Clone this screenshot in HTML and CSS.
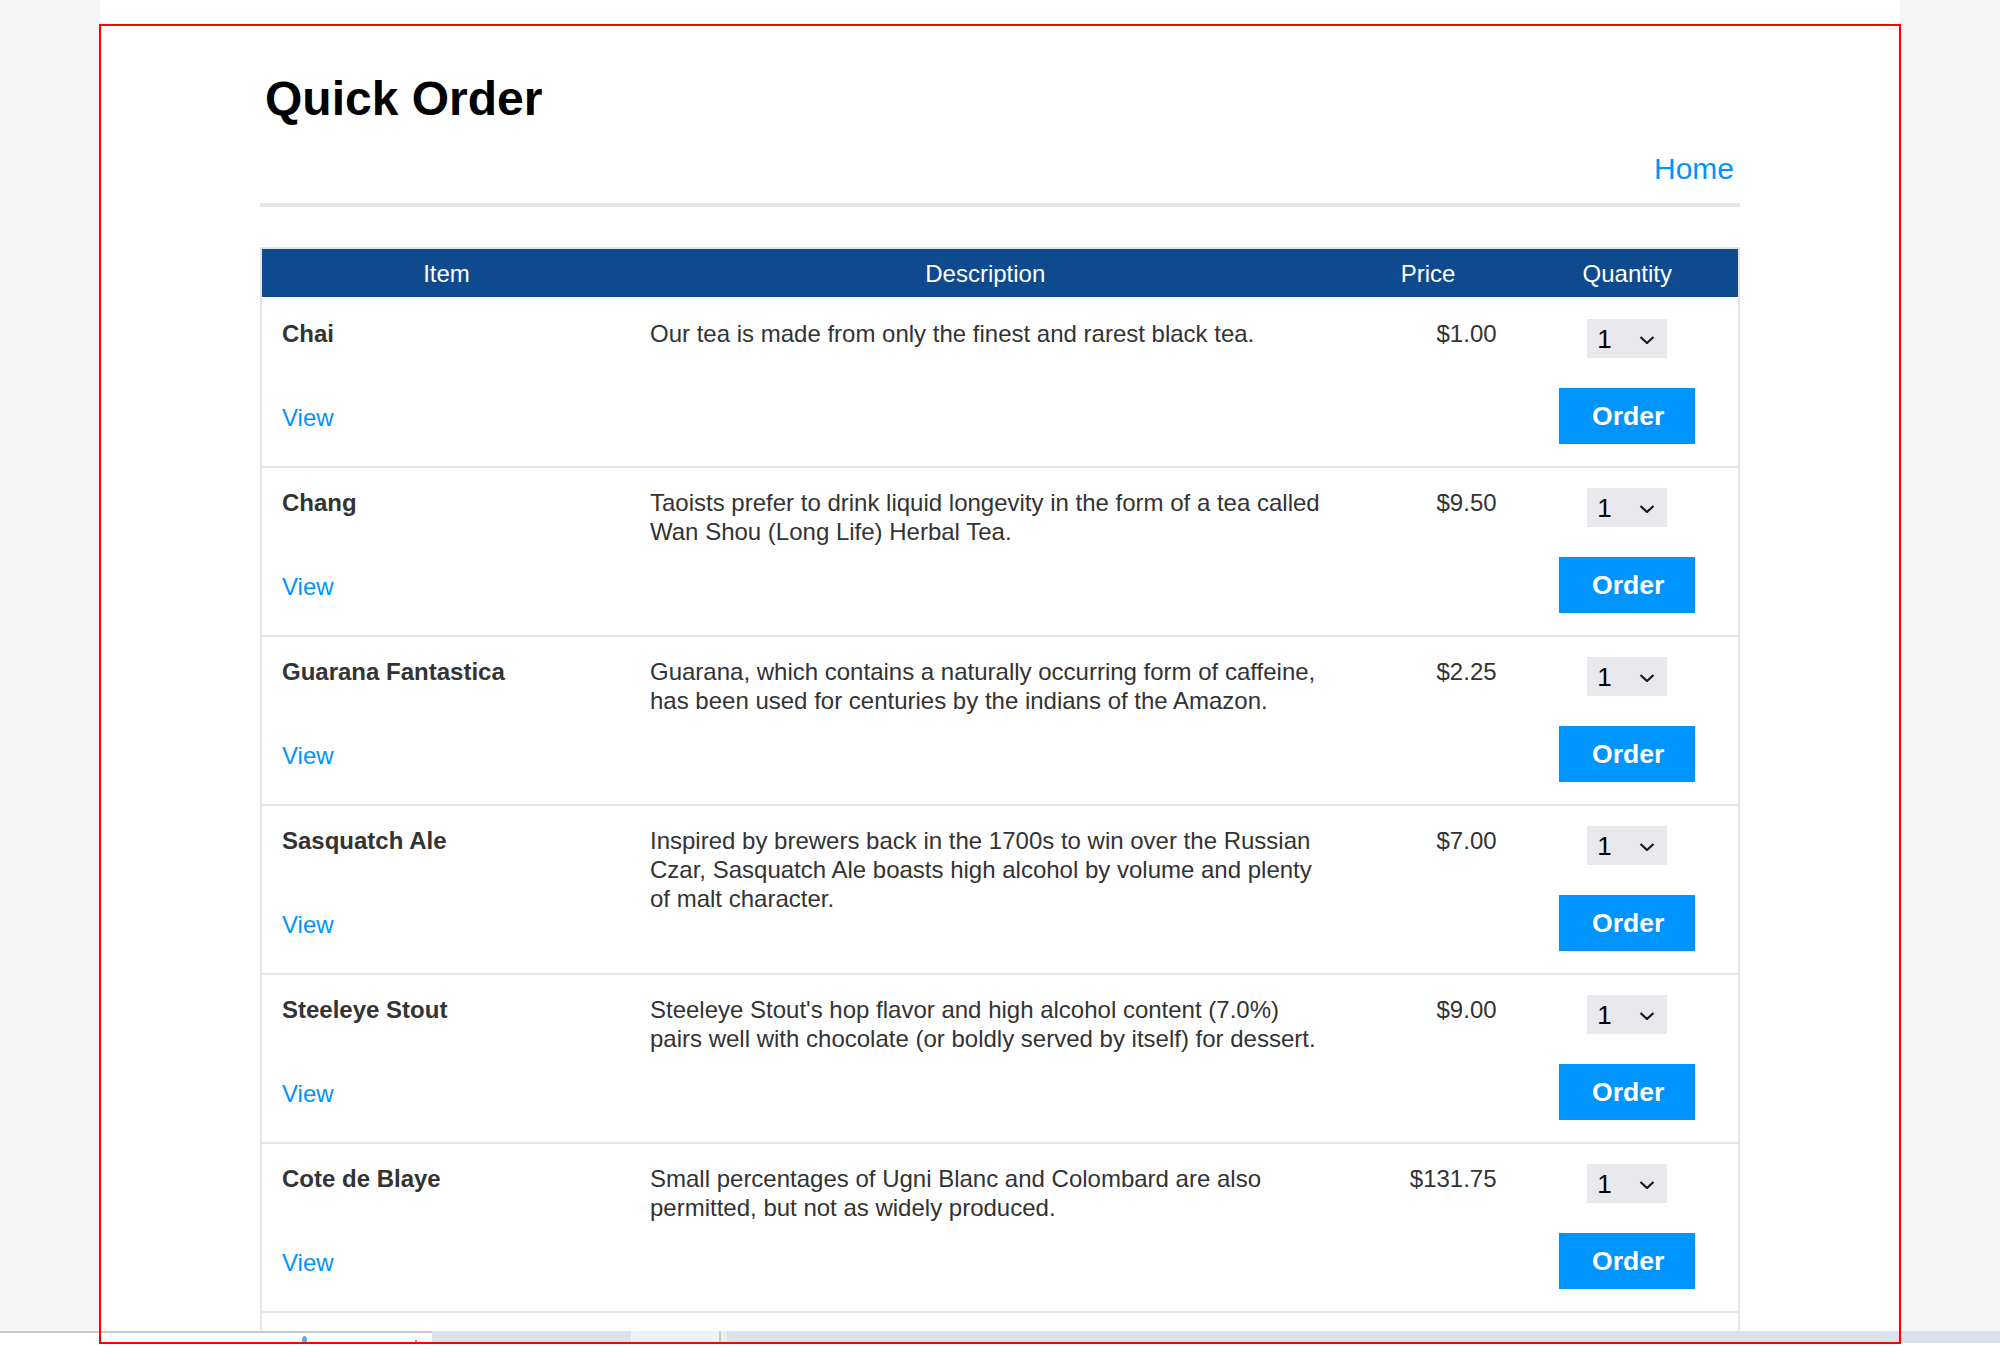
FILE: index.html
```html
<!DOCTYPE html>
<html lang="en">
<head>
<meta charset="utf-8">
<title>Quick Order</title>
<link rel="stylesheet" href="styles.css">
</head>
<body>
<div class="viewport">
  <div class="page">
    <div class="container">
      <h1 class="title">Quick Order</h1>
      <nav class="nav"><a href="#" class="nav-link">Home</a></nav>
      <div class="rule"></div>
      <div class="table">
        <div class="thead">
          <div class="th">Item</div>
          <div class="th">Description</div>
          <div class="th">Price</div>
          <div class="th">Quantity</div>
        </div>

        <div class="row">
          <div class="name">Chai</div>
          <div class="desc">Our tea is made from only the finest and rarest black tea.</div>
          <div class="price">$1.00</div>
          <div class="qty"><select class="qty-select"><option>1</option><option>2</option><option>3</option></select><svg class="chev" viewBox="0 0 16 8" width="16" height="8"><path d="M1.5 1 L8 7 L14.5 1" fill="none" stroke="#1a1a1a" stroke-width="2.2"/></svg></div>
          <a href="#" class="view">View</a>
          <button class="order">Order</button>
        </div>

        <div class="row">
          <div class="name">Chang</div>
          <div class="desc">Taoists prefer to drink liquid longevity in the form of a tea called Wan Shou (Long Life) Herbal Tea.</div>
          <div class="price">$9.50</div>
          <div class="qty"><select class="qty-select"><option>1</option><option>2</option><option>3</option></select><svg class="chev" viewBox="0 0 16 8" width="16" height="8"><path d="M1.5 1 L8 7 L14.5 1" fill="none" stroke="#1a1a1a" stroke-width="2.2"/></svg></div>
          <a href="#" class="view">View</a>
          <button class="order">Order</button>
        </div>

        <div class="row">
          <div class="name">Guarana Fantastica</div>
          <div class="desc">Guarana, which contains a naturally occurring form of caffeine, has been used for centuries by the indians of the Amazon.</div>
          <div class="price">$2.25</div>
          <div class="qty"><select class="qty-select"><option>1</option><option>2</option><option>3</option></select><svg class="chev" viewBox="0 0 16 8" width="16" height="8"><path d="M1.5 1 L8 7 L14.5 1" fill="none" stroke="#1a1a1a" stroke-width="2.2"/></svg></div>
          <a href="#" class="view">View</a>
          <button class="order">Order</button>
        </div>

        <div class="row">
          <div class="name">Sasquatch Ale</div>
          <div class="desc">Inspired by brewers back in the 1700s to win over the Russian Czar, Sasquatch Ale boasts high alcohol by volume and plenty of malt character.</div>
          <div class="price">$7.00</div>
          <div class="qty"><select class="qty-select"><option>1</option><option>2</option><option>3</option></select><svg class="chev" viewBox="0 0 16 8" width="16" height="8"><path d="M1.5 1 L8 7 L14.5 1" fill="none" stroke="#1a1a1a" stroke-width="2.2"/></svg></div>
          <a href="#" class="view">View</a>
          <button class="order">Order</button>
        </div>

        <div class="row">
          <div class="name">Steeleye Stout</div>
          <div class="desc">Steeleye Stout's hop flavor and high alcohol content (7.0%) pairs well with chocolate (or boldly served by itself) for dessert.</div>
          <div class="price">$9.00</div>
          <div class="qty"><select class="qty-select"><option>1</option><option>2</option><option>3</option></select><svg class="chev" viewBox="0 0 16 8" width="16" height="8"><path d="M1.5 1 L8 7 L14.5 1" fill="none" stroke="#1a1a1a" stroke-width="2.2"/></svg></div>
          <a href="#" class="view">View</a>
          <button class="order">Order</button>
        </div>

        <div class="row">
          <div class="name">Cote de Blaye</div>
          <div class="desc">Small percentages of Ugni Blanc and Colombard are also permitted, but not as widely produced.</div>
          <div class="price">$131.75</div>
          <div class="qty"><select class="qty-select"><option>1</option><option>2</option><option>3</option></select><svg class="chev" viewBox="0 0 16 8" width="16" height="8"><path d="M1.5 1 L8 7 L14.5 1" fill="none" stroke="#1a1a1a" stroke-width="2.2"/></svg></div>
          <a href="#" class="view">View</a>
          <button class="order">Order</button>
        </div>

        <div class="row row-partial"></div>
      </div>
    </div>
  </div>
</div>
<div class="statusbar">
  <div class="sb-tab"><span class="sb-dot"></span><span class="sb-mark"></span></div>
  <div class="sb-seg sb-a"></div>
  <div class="sb-seg sb-b"></div>
  <div class="sb-sep"></div>
  <div class="sb-seg sb-rest"></div>
</div>
<div class="footer-white"></div>
<div class="frame"></div>
</body>
</html>
```

FILE: styles.css
```css
html, body {
  margin: 0;
  padding: 0;
}

body {
  background: #ffffff;
  font-family: "Liberation Sans", Arial, sans-serif;
  color: #333333;
  position: relative;
  width: 2000px;
  height: 1369px;
  overflow: hidden;
}

.viewport {
  height: 1331px;
  background: #f5f5f5;
  overflow: hidden;
}

.page {
  width: 1800px;
  height: 1331px;
  margin: 0 auto;
  background: #ffffff;
  overflow: hidden;
}

.container {
  width: 1480px;
  margin: 0 auto;
  padding-top: 70px;
}

.title {
  margin: 0;
  padding-left: 5px;
  font-size: 48px;
  line-height: 58px;
  font-weight: bold;
  color: #000000;
}

.nav {
  margin-top: 23px;
  text-align: right;
  padding-right: 6px;
  font-size: 30px;
  line-height: 36px;
  height: 36px;
}

.nav-link {
  color: #0094ff;
  text-decoration: none;
}

.rule {
  margin-top: 16px;
  height: 4px;
  background: #e5e5e5;
}

.table {
  margin-top: 40px;
  border: 2px solid #e5e5e5;
  border-bottom: none;
}

.thead {
  display: grid;
  grid-template-columns: 25% 48% 12% 15%;
  height: 48px;
  background: #0f4a8f;
  border-bottom: 2px solid #ffffff;
}

.th {
  color: #ffffff;
  font-size: 24px;
  line-height: 48px;
  padding-top: 1px;
  text-align: center;
}

.row {
  display: grid;
  grid-template-columns: 25% 48% 12% 15%;
  grid-template-rows: 39px 56px;
  row-gap: 30px;
  padding: 20px 0 22px;
  border-bottom: 2px solid #e5e5e5;
  font-size: 24px;
  line-height: 28.8px;
}

.name {
  grid-column: 1;
  grid-row: 1;
  padding: 1px 0 0 20px;
  font-weight: bold;
  color: #333333;
}

.view {
  grid-column: 1;
  grid-row: 2;
  align-self: center;
  justify-self: start;
  margin-left: 20px;
  margin-top: 4px;
  color: #0094ff;
  text-decoration: none;
}

.desc {
  grid-column: 2;
  grid-row: 1 / span 2;
  padding: 1px 10px 0 19px;
  color: #333333;
}

.price {
  grid-column: 3;
  grid-row: 1;
  text-align: right;
  padding: 1px 20px 0 0;
  color: #333333;
}

.qty {
  grid-column: 4;
  grid-row: 1;
  justify-self: center;
  position: relative;
  width: 80px;
  height: 39px;
}

.qty-select {
  appearance: none;
  -webkit-appearance: none;
  width: 80px;
  height: 39px;
  margin: 0;
  border: none;
  border-radius: 0;
  background: #e9e9ed;
  color: #000000;
  font-family: "Liberation Sans", Arial, sans-serif;
  font-size: 26px;
  padding: 0 0 0 10px;
  outline: none;
}

.chev {
  position: absolute;
  right: 12px;
  top: 17px;
  pointer-events: none;
}

.order {
  grid-column: 4;
  grid-row: 2;
  justify-self: center;
  width: 136px;
  height: 56px;
  border: none;
  border-radius: 0;
  background: #0094ff;
  color: #ffffff;
  font-family: "Liberation Sans", Arial, sans-serif;
  font-weight: bold;
  font-size: 26.6px;
  padding: 0 0 0 2px;
  cursor: pointer;
}

.statusbar {
  display: flex;
  height: 12px;
}

.sb-tab {
  width: 432px;
  background: #ffffff;
  border-top: 2px solid #c9c9c9;
  box-sizing: border-box;
  position: relative;
}

.sb-dot {
  position: absolute;
  left: 302px;
  top: 3px;
  width: 5px;
  height: 7px;
  border-radius: 50%;
  background: #5aaee8;
}

.sb-mark {
  position: absolute;
  left: 415px;
  top: 7px;
  width: 2px;
  height: 3px;
  background: #e070d0;
}

.sb-seg {
  background: #dae3eb;
}

.sb-a {
  width: 199px;
}

.sb-b {
  width: 88px;
  background: #eef2f6;
}

.sb-sep {
  width: 2px;
  background: #c9c9c9;
}

.sb-rest {
  flex: 1;
  border-left: 6px solid #e9eef3;
}

.footer-white {
  height: 26px;
  background: #ffffff;
}

.frame {
  position: absolute;
  left: 99px;
  top: 24px;
  width: 1802px;
  height: 1320px;
  border: 2px solid #ff0000;
  box-sizing: border-box;
  pointer-events: none;
}
```
